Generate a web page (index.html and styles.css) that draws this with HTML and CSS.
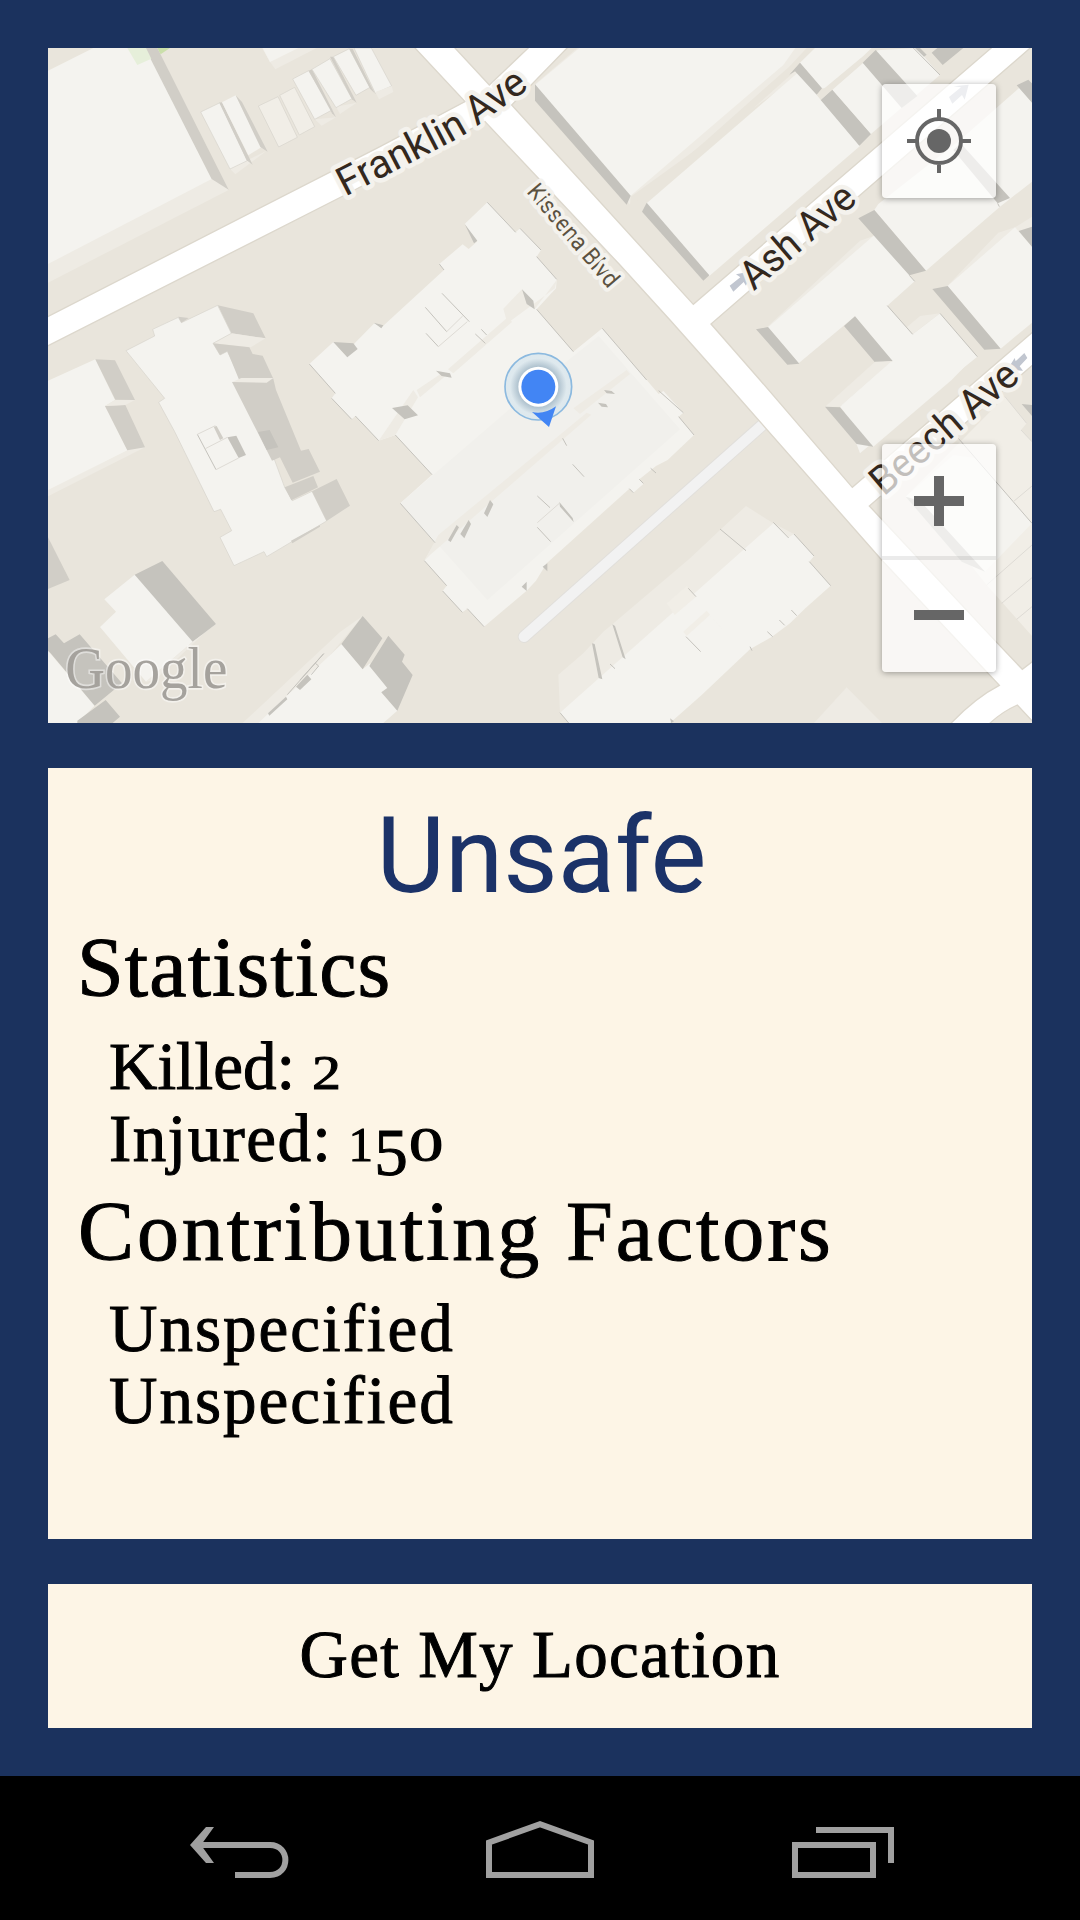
FILE: index.html
```html
<!DOCTYPE html>
<html lang="en">
<head>
<meta charset="utf-8">
<title>Street Safety</title>
<link rel="stylesheet" href="styles.css">
</head>
<body>
<main class="app">
  <section class="map">
    <svg class="map-canvas" viewBox="0 0 2952 2025">
      <defs>
        <path id="franklin" d="M892 446L1225 274Q1262 254 1292 231L1480 94"/>
        <path id="kissena" d="M1434 432L1700 746"/>
        <path id="ash" d="M2117 730L2480 419"/>
        <path id="beech" d="M2507 1346L2952 965"/>
        <radialGradient id="glow"><stop offset=".55" stop-color="#9db4c4"/><stop offset=".85" stop-color="#dce8ee"/><stop offset="1" stop-color="#dce8ee"/></radialGradient>
      </defs>

      <!-- streets -->
      <path class="lane-edge" d="M1428 1766L2152 1123"/>
      <path class="lane" d="M1428 1766L2160 1116"/>
      <g class="road">
        <path d="M-9 810L996 296L1251 161L1101 0L1092 -9H1212L1221 0L1324 111L1450 -9H1566L1391 171L1936 769L2840 -9H2957L1989 828L2136 996L2413 1318L2961 846V945L2464 1374L2844 1781L2923 1864L2961 1835V2028L2908 1971Q2860 1992 2820 2031H2704Q2780 1950 2854 1912L2501 1536L2026 996L1866 816L1716 651L1311 221L891 441L-9 898Z"/>
      </g>

      <!-- north-west blocks -->
      <g transform="translate(-24 -24)">
        <path class="side" d="M24 640L520 410L566 450L24 728Z"/>
        <path class="roof" d="M24 92L160 24H318L515 417L24 672Z"/>
        <path class="shade" d="M315 24H352L566 449L515 417Z"/>
        <path class="park" d="M262 24H318L334 56L292 75Z"/>
        <path class="park-dark" d="M352 24H390L362 43Z"/>
        <path class="side" d="M666 24H830L706 88L690 66Z"/>
        <path class="roof" d="M668 24H775L690 66Z"/>
        <path class="side" d="M570 386L680 332L586 403Z"/>
        <path class="roof edge" d="M482 216L540 188L622 362L570 387Z"/>
        <path class="shade" d="M538 188L546 187L638 374L620 361Z"/>
        <path class="roof" d="M546 187L587 166L664 322L625 346Z"/>
        <path class="shade" d="M587 166L606 186L683 335L661 321Z"/>
        <path class="pale edge" d="M655 198L714 170L772 292L716 321Z"/>
        <path class="pale edge" d="M719 166L764 142L824 260L778 285Z"/>
        <path class="side" d="M824 238L888 232L845 257Z M888 200L950 188L900 222Z"/>
        <path class="roof edge" d="M758 117L806 92L876 210L824 238Z"/>
        <path class="shade" d="M806 92L816 88L888 232L876 220Z"/>
        <path class="roof edge" d="M816 88L870 56L936 176L888 203Z"/>
        <path class="shade" d="M870 50L880 50L950 188L936 178Z"/>
        <path class="roof edge" d="M880 50L928 26L990 142L948 166Z"/>
        <path class="shade" d="M928 26L938 26L1004 160L990 146Z"/>
        <path class="roof edge" d="M942 24H994L1055 138L1006 160Z"/>
        <path class="side" d="M1006 156L1055 138L1060 156L1017 178Z"/>

        <!-- apartment row below Franklin Ave -->
        <path class="shade" d="M533 796L640 820L677 895L574 880Z"/>
        <path class="side" d="M574 880L677 895L632 922L519 910Z"/>
        <path class="roof edge" d="M258 932L344 888L338 868L415 832L424 848L533 796L574 880L519 910L540 945L562 934L604 1020L700 1250L734 1342L757 1382L816 1354L860 1443L680 1550L672 1535L582 1577L540 1492L575 1472L542 1408L522 1415L480 1330L404 1175L356 1087L374 1075Z"/>
        <path class="shade" d="M519 910L628 922L638 942L668 947L700 1016L708 1050L783 1232L806 1227L840 1295L758 1328L720 1252L696 1262L576 1026H600L562 934L540 945Z"/>
        <path class="side" d="M576 1026L604 1014H700L680 1028Z"/>
        <path class="shade" d="M734 1342L820 1308L834 1342L754 1381Z M816 1354L890 1317L930 1397L860 1443Z M753 1502L840 1455V1460L757 1510Z M415 830L446 834L424 848Z"/>
        <path class="dark" d="M654 1176L689 1170L715 1222L680 1230Z M562 1192L589 1187L618 1245L596 1254Z"/>
        <path class="shade" d="M521 1160L530 1158L550 1195L540 1200Z"/>
        <path class="outline" d="M472 1183L528 1289"/>
        <path class="outline soft" d="M472 1183L526 1157M528 1289L596 1254M496 1226L562 1192"/>

        <path class="side" d="M24 1340L262 1228L315 1222L24 1369Z"/>
        <path class="roof" d="M24 1022L166 958L225 1080L195 1098L262 1231L24 1350Z"/>
        <path class="shade" d="M166 958L225 961L285 1080L226 1079Z M195 1098L256 1095L315 1222L262 1231Z"/>
        <path class="side" d="M195 1098L226 1080L285 1080L256 1095Z"/>
      </g>

      <!-- south-west blocks -->
      <g transform="translate(-24 996)">
        <path class="shade" d="M24 472L89 600L24 627Z"/>
        <path class="roof" d="M284 584L193 658L228 695L180 741L318 905L458 785L528 732Z"/>
        <path class="dark" d="M284 584L367 543L528 732L458 785Z"/>
        <path class="side" d="M318 905L458 785L490 762L345 900Z"/>
        <path class="roof" d="M24 812L164 977L112 1029H24Z"/>
        <path class="dark" d="M32 820L24 812V775L47 763L72 790L119 763L246 910L164 977Z M112 1022L197 960L240 1010L218 1029H112Z"/>
        <path class="side" d="M608 1029L900 756L968 708L700 1029Z"/>
        <path class="roof" d="M655 1029L905 792L968 868L990 850L1042 924L1024 937L1072 992L1030 1029Z"/>
        <path class="dark" d="M968 708L1027 775L968 868L904 792Z M1045 767L1094 824L1086 845L1118 885L1072 992L1024 937L1042 924L988 858Z M768 920L802 884L814 898L780 930Z M684 1000L738 950L742 958L688 1007Z"/>
        <path class="outline" d="M742 944L852 820M780 900L850 822M826 850L836 858L814 884"/>
      </g>

      <!-- central complex -->
      <g transform="translate(966 -24)">
        <path class="roof" d="M352 487L437 577L450 565L513 630L500 650L560 718L558 745L500 808L610 935L697 865L830 1020L866 1062L880 1053L940 1118L926 1130L972 1185L893 1260L858 1278L808 1318L820 1332L790 1358L778 1346L530 1570L498 1622L470 1652L342 1760L292 1706L277 1717L218 1653L230 1637L163 1562L195 1508L91 1390L186 1304L76 1185L26 1202L-44 1128L-55 1138L-115 1075L-104 1060L-182 972L-110 906L-68 952L-46 910L13 850L35 862L222 690L208 672L278 613L296 627L322 604L284 552Z"/>
        <path class="tone" d="M91 1390L520 1020L686 888L930 1168L352 1680L210 1520L195 1508Z"/>
        <path class="side" d="M400 806L456 748L494 808L560 720L555 745L412 850Z M234 988L415 830L426 846L250 1000Z"/>
        <path class="side" d="M163 1562L205 1485L650 1118L664 1124L180 1545Z M610 1105L770 990L780 1002L630 1122Z"/>
        <path class="side" d="M26 1202L130 1050L144 1072L76 1185Z M140 1050L215 1000H236L150 1072Z"/>
        <path class="dark" d="M284 552L322 602L312 610Z M456 748L490 782L494 808L470 792Z M11 848L40 856L34 865Z M198 992L240 1000L245 1013L215 1008Z M66 1104L113 1096L144 1126L104 1138Z M-110 906L-50 910L-37 927L-68 952Z M455 1640L470 1625V1653Z M518 1580L532 1570V1594Z"/>
        <path class="dark" d="M360 1380L370 1393L352 1431L342 1420Z M296 1440L303 1452L283 1495L271 1482Z M260 1455L267 1462L242 1506L234 1501Z M568 1386L608 1434L611 1446L570 1400Z M702 1050L725 1053L735 1062L710 1060Z M684 1088L708 1092L714 1102L695 1100Z"/>
        <path class="outline" d="M352 487L437 577M450 565L513 630M500 650L560 718M500 808L610 935M697 865L830 1020M866 1052L940 1118M926 1130L972 1185M216 760L298 845M166 802L230 875M168 880L205 920M76 1185L186 1304M91 1390L195 1508M163 1562L230 1637M218 1653L277 1717M292 1706L342 1760M502 1368L540 1403M502 1462L542 1505M608 1273L642 1310M578 1195L590 1217M316 882L346 910M334 868L350 885M208 672L222 690M778 1346L790 1358M808 1318L820 1330M842 1285L858 1299"/>
        <path class="outline soft" d="M230 875L278 828M205 920L292 845M502 1448L568 1390"/>
        <path class="outline" d="M-182 972L-104 1060M-115 1075L-55 1138M-44 1128L26 1202"/>
      </g>

      <!-- southern block -->
      <g transform="translate(966 996)">
        <path class="side" d="M565 884L640 820L700 755L728 732L960 535L1050 450L1128 378L1210 430L1272 462L1000 700L570 998Z"/>
        <path class="roof" d="M570 998L1210 430L1256 472L1272 462L1332 528L1318 545L1382 617L1306 685L1260 730L1206 770L1140 808L995 945L900 1029H596Z"/>
        <path class="pale" d="M890 670L950 618L978 650L914 705Z M940 755L1010 692L1020 704L950 768Z"/>
        <path class="dark" d="M666 790L674 792L697 898L686 894Z M727 733L735 738L767 838L758 832Z M1006 694L1060 750L1052 742Z"/>
        <path class="outline" d="M570 998L596 1029M720 852L735 866M948 770L992 815M955 625L978 650M1050 447L1128 512M1210 427L1256 474M1272 462L1332 528M1318 545L1382 617M1264 690L1280 707M1228 720L1244 736M1192 755L1208 770M1140 800L1146 812"/>
        <path class="dark" d="M900 1015L912 1024L904 1029Z"/>
        <path class="side" d="M1332 1029L1430 922L1536 1029Z"/>
      </g>

      <!-- north-east blocks -->
      <g transform="translate(966 -24)">
        <path class="side" d="M495 133L622 24H800L1400 24L782 470L780 494Z"/>
        <path class="roof" d="M495 135L628 24H1276L1240 75L782 467Z"/>
        <path class="land" d="M800 480L1010 300L1260 78L1310 24H1355L1290 80L1020 320L830 492Z"/>
        <path class="dark" d="M495 133L782 467L770 494L495 182Z"/>
        <path class="roof" d="M830 490L1285 97L1470 318L1018 708Z"/>
        <path class="dark" d="M830 488L1018 706L1000 722L816 515Z"/>
      </g>
      <g transform="translate(1956 -24)">
        <path class="roof" d="M300 68L345 24H530L490 68L396 148L365 145Z"/>
        <path class="dark" d="M300 68L366 145L350 164L285 94L268 104Z M396 148L513 282L478 317L362 180Z"/>
        <path class="roof" d="M396 148L530 31L650 24L720 105L513 282Z"/>
        <path class="land" d="M350 164L490 48L515 24H540L490 68L362 180Z"/>
        <path class="dark" d="M527 30L652 168L605 204L488 68Z M695 38L712 24H790L728 75Z M645 24H660L680 44L672 50Z"/>
        <path class="roof" d="M535 492L780 300L985 120L996 130V425L900 500L678 692L523 510Z"/>
        <path class="dark" d="M782 310L930 474L893 490L760 330Z M985 119L996 130V188L950 136Z"/>
        <path class="side" d="M202 860L480 602L523 587L540 610L220 890Z"/>
        <path class="roof" d="M204 862L523 585L644 724L562 797L638 883L720 820L832 950L745 1020L480 1240L420 1080L577 965L465 829L296 970Z"/>
        <path class="side" d="M638 883L620 862L660 828L720 820Z"/>
        <path class="dark" d="M523 510L678 692L628 706L475 535Z M168 868L204 861L298 971L262 974Z M465 829L578 963L526 968L432 858Z"/>
        <path class="side" d="M740 740L895 578L945 562L996 530V610Z"/>
        <path class="roof" d="M743 738L945 562L996 620V848L902 926Z"/>
        <path class="dark" d="M743 738L902 926L853 929L697 747Z M956 573L996 560V620Z"/>
        <path class="outline" d="M628 706L644 724M562 797L638 883M720 820L832 950M893 490L898 500M640 24L720 105"/>
        <path class="side" d="M375 1100L525 965L578 963L420 1100Z"/>
        <path class="roof" d="M420 1100L572 966L804 970L755 1020L520 1220Z"/>
        <path class="dark" d="M375 1100L420 1102L520 1220L470 1212Z"/>
      </g>
      <g transform="translate(1956 996)">
        <path class="pale" d="M617 350L915 50L980 130L963 150L996 185V768L860 615L720 440Z"/>
        <path class="roof" d="M617 350L760 225L830 235L996 430L855 575Z"/>
        <path class="dark" d="M617 350L660 362L855 575L785 545Z M965 72L996 75V108Z"/>
        <path class="outline" d="M775 175L996 430"/>
        <path class="outline soft" d="M915 50L980 130M963 150L996 185M940 365L996 318M860 615L996 495M905 670L996 593M950 718L996 680"/>
      </g>

      <!-- one-way arrows -->
      <g class="arrow">
        <path d="M2045 713L2077 688L2064 679L2110 670L2094 713L2087 702L2056 731Z"/>
        <path d="M2703 147L2739 118L2717 115L2762 110L2750 155L2742 141L2713 167Z"/>
        <path d="M2929 915L2903 940L2900 930L2878 965L2925 968L2915 955L2938 930Z"/>
      </g>

      <!-- street names -->
      <g class="street">
        <text><textPath href="#franklin" textLength="643" lengthAdjust="spacingAndGlyphs">Franklin Ave</textPath></text>
        <text><textPath href="#ash" textLength="414" lengthAdjust="spacingAndGlyphs">Ash Ave</textPath></text>
        <text><textPath href="#beech" textLength="543" lengthAdjust="spacingAndGlyphs">Beech Ave</textPath></text>
        <text class="street-minor"><textPath href="#kissena" textLength="382" lengthAdjust="spacingAndGlyphs">Kissena Blvd</textPath></text>
      </g>

      <!-- current position -->
      <circle cx="1471" cy="1016" r="100" fill="url(#glow)" fill-opacity=".9" stroke="#8bb9df" stroke-width="5"/>
      <circle cx="1471" cy="1016" r="60" fill="#fff"/>
      <circle cx="1471" cy="1016" r="51" fill="#4285f4"/>
      <path fill="#4285f4" d="M1452 1092Q1490 1100 1524 1075L1503 1137Z"/>

      <text class="logo" x="52" y="1921" textLength="486" lengthAdjust="spacingAndGlyphs">Google</text>
    </svg>
    <button class="control locate" aria-label="My location">
      <svg viewBox="0 0 342 342"><circle cx="171" cy="171" r="36" fill="#666"/><path fill="none" stroke="#666" stroke-width="12" d="M171 75v30M171 237v30M75 171h30M237 171h30M105 171a66 66 0 1 0 132 0a66 66 0 1 0 -132 0"/></svg>
    </button>
    <div class="control zoom">
      <button aria-label="Zoom in"><svg viewBox="0 0 342 342"><path fill="#666" d="M156 96h30v60h60v30h-60v60h-30v-60h-60v-30h60z"/></svg></button>
      <button aria-label="Zoom out"><svg viewBox="0 0 342 342"><path fill="#666" d="M96 156h150v30H96z"/></svg></button>
    </div>
  </section>

  <section class="report">
    <h1>Unsafe</h1>
    <h2>Statistics</h2>
    <ul>
      <li class="killed">Killed: <span class="low">2</span></li>
      <li class="injured">Injured: <span class="low">1</span><span class="drop">5</span><span class="low round">0</span></li>
    </ul>
    <h2 class="factors-title">Contributing Factors</h2>
    <ul class="factors">
      <li>Unspecified</li>
      <li>Unspecified</li>
    </ul>
  </section>

  <button class="locate-me">Get My Location</button>
</main>

<nav class="navbar">
  <svg viewBox="180 1776 120 144"><path class="glyph" d="M197 1845H270C290.500 1845 290.500 1875 270 1875H235"/><path fill="#a0a0a0" d="M206 1827H214L201 1845L214 1863H206L190 1845Z"/></svg>
  <svg viewBox="480 1776 120 144"><path class="glyph" d="M489 1842.500L540 1824.200L591 1842.500V1875H489Z"/></svg>
  <svg viewBox="780 1776 120 144"><path class="glyph" d="M795 1845H873V1875H795ZM816 1830H891V1863"/></svg>
</nav>
</body>
</html>
```
FILE: styles.css
```css
* { box-sizing: border-box; }

body {
  margin: 0;
  width: 1080px;
  height: 1920px;
  display: flex;
  flex-direction: column;
  background: #1b325e;
  color: #000;
  font-family: "Liberation Serif", serif;
}

button { border: 0; padding: 0; background: none; font: inherit; color: inherit; }
h1, h2, ul { margin: 0; padding: 0; font-weight: 400; list-style: none; }

.app {
  flex: 1;
  display: flex;
  flex-direction: column;
  padding: 48px;
}

/* Map */
.map { position: relative; height: 675px; margin-bottom: 45px; }
.map-canvas { display: block; width: 984px; height: 675px; background: #e9e5dc; }
.road { fill: #fff; stroke: #dcd7cc; stroke-width: 4; }
.lane, .lane-edge { fill: none; stroke: #f2f2f2; stroke-width: 32; stroke-linecap: round; }
.lane-edge { stroke: #e1dfdb; stroke-width: 38; }
.land { fill: #e9e5dc; }
.roof { fill: #f4f3ef; }
.tone { fill: #f1f0ec; }
.pale { fill: #f1eee7; }
.side { fill: #eeebe4; }
.shade { fill: #d1cec7; }
.dark { fill: #c5c3bd; }
.park { fill: #e6efda; }
.park-dark { fill: #cadfaa; }
.edge { stroke: #d6d3cb; stroke-width: 2; }
.outline { fill: none; stroke: #c5c3bd; stroke-width: 3; }
.outline.soft { stroke: #dedbd5; }
.arrow { fill: #c1c6d0; }
.street {
  font-family: Roboto, sans-serif;
  font-size: 120px;
  fill: #33281e;
  stroke: #f4f2ed;
  stroke-width: 28px;
  stroke-linejoin: round;
  paint-order: stroke;
}
.street .street-minor { font-size: 72px; fill: #5b5140; stroke-width: 24px; }
.logo {
  font-size: 178px;
  fill: #a5a29d;
  stroke: rgba(255, 255, 255, .45);
  stroke-width: 10px;
  paint-order: stroke;
}

.control {
  position: absolute;
  right: 36px;
  width: 114px;
  border-radius: 4px;
  background: rgba(255, 255, 255, .7);
  box-shadow: 0 1px 6px rgba(0, 0, 0, .35);
}
.control svg { display: block; width: 114px; height: 114px; }
.locate { top: 36px; height: 114px; }
.zoom { bottom: 51px; height: 228px; }
.zoom button { display: block; height: 114px; }
.zoom button:first-child { box-shadow: inset 0 -2px rgba(0, 0, 0, .08); }
.zoom button:last-child { box-shadow: inset 0 2px rgba(0, 0, 0, .08); }

/* Report card */
.report {
  height: 771px;
  margin-bottom: 45px;
  padding: 24px 31px;
  background: #fdf5e6;
  -webkit-text-stroke: 1px #000;
}
.report h1 {
  font: 105.5px/128px Roboto, sans-serif;
  text-align: center;
  text-indent: 3px;
  color: #1b3268;
  -webkit-text-stroke: 0;
}
.report h2 { font-size: 84px; line-height: 96px; letter-spacing: 1.1px; text-indent: -2px; }
.report ul { padding-left: 30px; margin: 14px 0 10px; font-size: 67px; line-height: 72px; }
.report li { height: 72px; white-space: nowrap; }
.report .injured { letter-spacing: 1.4px; }
.report .factors-title { letter-spacing: 2.9px; text-indent: -1px; }
.report .factors { margin-top: 12px; letter-spacing: 2px; }

/* Old-style figures */
.low { font-size: 49px; line-height: 1; }
.killed .low { display: inline-block; transform: scaleX(1.18); transform-origin: 0 50%; }
.injured .low:not(.round) { margin-left: -2px; }
.drop { display: inline-block; line-height: 1; transform: translateY(14px); }
.round { display: inline-block; transform: scaleX(1.4); transform-origin: 0 50%; }

.locate-me {
  height: 144px;
  padding-bottom: 4px;
  background: #fdf5e6;
  font-size: 67px;
  letter-spacing: 1.3px;
  -webkit-text-stroke: 1px #000;
}

/* System bar */
.navbar {
  height: 144px;
  display: flex;
  justify-content: center;
  gap: 180px;
  background: #000;
}
.navbar svg { width: 120px; height: 144px; }
.glyph { fill: none; stroke: #a0a0a0; stroke-width: 6; }
```
